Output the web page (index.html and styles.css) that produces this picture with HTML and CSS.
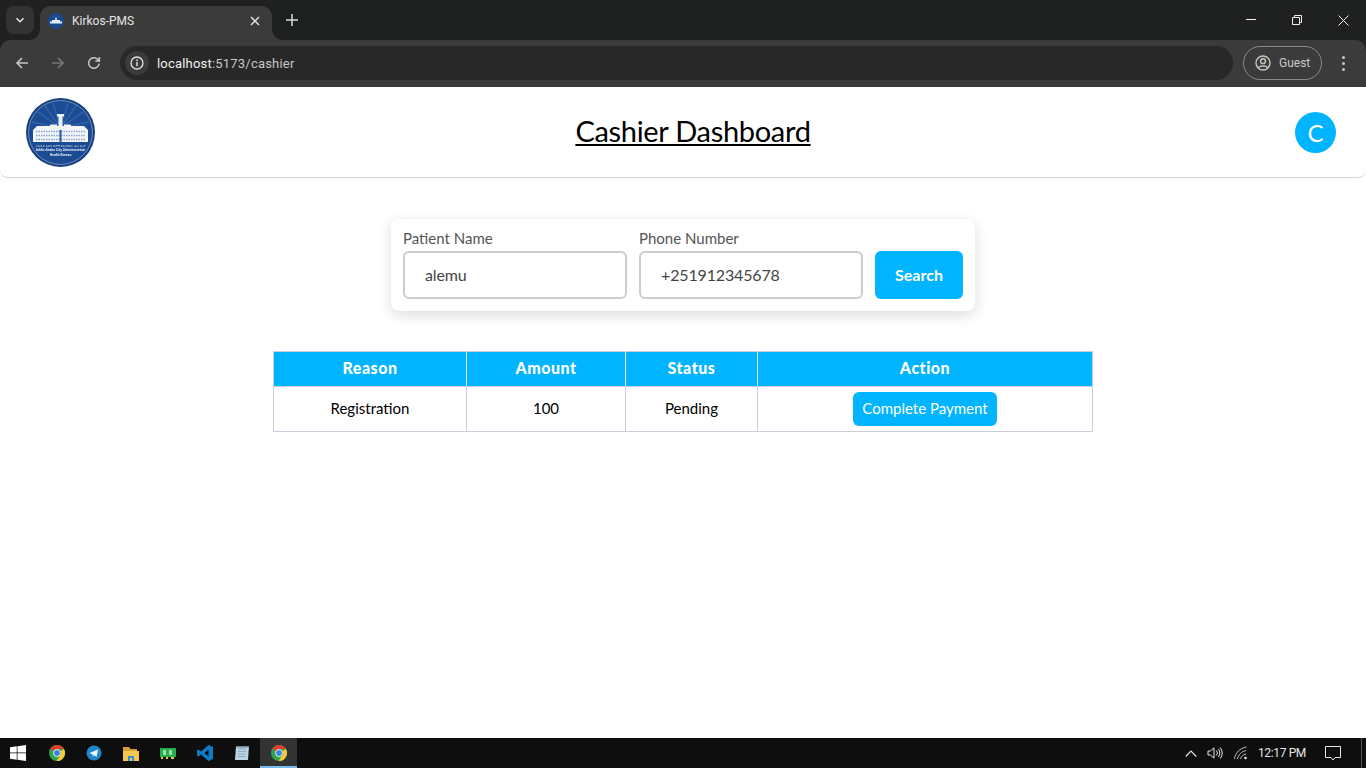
FILE: index.html
```html
<!DOCTYPE html>
<html>
	<head>
		<meta charset="UTF-8">
		<title>Kirkos-PMS</title>
		<link rel="stylesheet" href="styles.css">
	</head>
	<body>
		<div class="tabstrip">
			<div class="tablist-btn">
				<svg width="12" height="12" viewBox="0 0 12 12"><path d="M2.500 4.200 6 7.700l3.500-3.500" fill="none" stroke="#e3e3e3" stroke-width="1.600"/></svg>
			</div>
			<div class="tab">
				<svg class="favicon" width="16" height="16" viewBox="0 0 16 16">
					<circle cx="8" cy="8" r="8" fill="#1b4a8c"/>
					<path d="M2 8.500h12v2H2zM4 7h8v1.500H4zM7.300 4.500h1.400V7H7.300z" fill="#e8eef6"/>
				</svg>
				<span class="tab-title">Kirkos-PMS</span>
				<svg class="tab-close" width="10" height="10" viewBox="0 0 10 10"><path d="M1 1l8 8M9 1 1 9" stroke="#e3e3e3" stroke-width="1.500"/></svg>
			</div>
			<svg class="newtab" width="12" height="12" viewBox="0 0 12 12"><path d="M6 0v12M0 6h12" stroke="#d8d8d8" stroke-width="1.500"/></svg>
			<div class="window-btns">
				<svg width="10" height="10" viewBox="0 0 10 10"><path d="M0 4.500h10" stroke="#f0f0f0"/></svg>
				<svg width="10" height="10" viewBox="0 0 10 10"><path d="M.5 2.500h7v7h-7zM2.500 2.500V.5h7v7h-2" fill="none" stroke="#f0f0f0"/></svg>
				<svg width="11" height="11" viewBox="0 0 11 11"><path d="M.5.5l10 10M10.500.5l-10 10" stroke="#f0f0f0"/></svg>
			</div>
		</div>

		<div class="toolbar">
			<svg class="nav-icon" width="16" height="16" viewBox="0 0 16 16"><path d="M14 8H3M8 3 3 8l5 5" fill="none" stroke="#c7c7c7" stroke-width="1.600"/></svg>
			<svg class="nav-icon" width="16" height="16" viewBox="0 0 16 16"><path d="M2 8h11M8 3l5 5-5 5" fill="none" stroke="#7a7a7a" stroke-width="1.600"/></svg>
			<svg class="nav-icon" width="16" height="16" viewBox="0 0 16 16"><path d="M13.200 8.600A5.300 5.300 0 1 1 11.700 4.200L13.400 6M13.400 2v4h-4" fill="none" stroke="#c7c7c7" stroke-width="1.500"/></svg>
			<div class="omnibox">
				<div class="site-info">
					<svg width="14" height="14" viewBox="0 0 14 14"><circle cx="7" cy="7" r="6" fill="none" stroke="#e3e3e3" stroke-width="1.300"/><path d="M7 6v4.200" stroke="#e3e3e3" stroke-width="1.400"/><circle cx="7" cy="4.200" r=".9" fill="#e3e3e3"/></svg>
				</div>
				<span class="url"><b>localhost</b>:5173/cashier</span>
			</div>
			<div class="guest">
				<svg width="16" height="16" viewBox="0 0 16 16"><circle cx="8" cy="8" r="7" fill="none" stroke="#c7c7c7" stroke-width="1.400"/><circle cx="8" cy="6.200" r="2.400" fill="none" stroke="#c7c7c7" stroke-width="1.400"/><path d="M3.400 12.600C5 10.400 11 10.400 12.600 12.600" fill="none" stroke="#c7c7c7" stroke-width="1.400"/></svg>
				<span>Guest</span>
			</div>
			<div class="kebab"><i></i><i></i><i></i></div>
		</div>

		<div class="page">
			<header class="top">
				<svg class="logo" width="69" height="69" viewBox="0 0 69 69">
					<circle cx="34.500" cy="34.500" r="34.500" fill="#163f7e"/>
					<circle cx="34.500" cy="34.500" r="32" fill="#1b4b92" stroke="#a9bedc" stroke-width=".6"/>
					<path d="M34.500 30 12 14M34.500 30 19 8M34.500 30 27 5M34.500 30 42 5M34.500 30 50 8M34.500 30 57 14M34.500 30 6 24M34.500 30 63 24" stroke="#2f5fa6" stroke-width="1.800"/>
					<path d="M31 16h7v2.500h-1.500V28h-4V18.500H31z" fill="#eef3f8"/>
					<path d="M7 32l4-4h13v-1.500h7V28h7v-1.500h7V28h13l4 4v12H7z" fill="#f2f5f9"/>
					<path d="M10 33.500h49M10 37.500h49M10 41.500h49" stroke="#8aa5c9" stroke-width="1.400" stroke-dasharray="1.500 1"/>
					<path d="M33.500 32h2v12h-2z" fill="#2d5a9c"/>
					<text class="logo-text" x="34.500" y="48.500" font-size="3.400">የአዲስ አበባ ከተማ አስተዳደር ጤና ቢሮ</text>
					<text class="logo-text" x="34.500" y="53" font-size="3.400" font-weight="700">Addis Ababa City Administration</text>
					<text class="logo-text" x="34.500" y="58" font-size="3.400" font-weight="700">Health Bureau</text>
				</svg>
				<h1 class="page-title">Cashier Dashboard</h1>
				<div class="avatar">C</div>
			</header>

			<main class="content">
				<form class="search-card">
					<label class="field">
						<span>Patient Name</span>
						<input type="text" value="alemu">
					</label>
					<label class="field">
						<span>Phone Number</span>
						<input type="text" value="+251912345678">
					</label>
					<button class="search-btn" type="button">Search</button>
				</form>

				<table class="bills">
					<colgroup>
						<col class="col-reason"><col class="col-amount"><col class="col-status"><col class="col-action">
					</colgroup>
					<thead>
						<tr><th>Reason</th><th>Amount</th><th>Status</th><th>Action</th></tr>
					</thead>
					<tbody>
						<tr>
							<td>Registration</td>
							<td>100</td>
							<td>Pending</td>
							<td><button class="pay-btn" type="button">Complete Payment</button></td>
						</tr>
					</tbody>
				</table>
			</main>
		</div>

		<footer class="taskbar">
			<div class="start">
				<svg width="16" height="16" viewBox="0 0 18 18"><path d="M0 2.600 7.600 1.500v7H0zM8.400 1.400 18 0v8.500H8.400zM0 9.400h7.600v7.100L0 15.400zM8.400 9.400H18V18l-9.600-1.400z" fill="#fff"/></svg>
			</div>
			<div class="task-icon">
				<svg width="16" height="16" viewBox="0 0 16 16"><use href="#chrome"/></svg>
			</div>
			<div class="task-icon">
				<svg width="16" height="16" viewBox="0 0 16 16"><circle cx="8" cy="8" r="7.500" fill="#1e88c7"/><path d="M3.500 8 12 4.500 10.600 12 8 10.200 6.800 11.400 6.600 9.400z" fill="#e9f5fb"/></svg>
			</div>
			<div class="task-icon">
				<svg width="16" height="15" viewBox="0 0 16 15"><path d="M0 1h6l1.500 2H14v3H0z" fill="#d9a032"/><path d="M0 5h16v10H0z" fill="#f6c94e"/><path d="M5 10h6v5H9v-3H7v3H5z" fill="#2f8fd8"/></svg>
			</div>
			<div class="task-icon">
				<svg width="16" height="12" viewBox="0 0 16 12"><path d="M0 1h16v9H0z" fill="#21b04b"/><path d="M3 3h3v5H3zM9 3h3v5H9z" fill="#a4d8a8"/><path d="M1 10h2v2H1zM6 10h2v2H6zM11 10h3v2h-3z" fill="#e5c93a"/></svg>
			</div>
			<div class="task-icon">
				<svg width="16" height="16" viewBox="0 0 16 16"><path d="M11.500 0 16 2v12l-4.500 2L4 9.500 1.300 11.600 0 11V5l1.300-.6L4 6.500zm0 4.600L7.300 8l4.200 3.400z" fill="#0a7cc9"/></svg>
			</div>
			<div class="task-icon">
				<svg width="16" height="16" viewBox="0 0 16 16"><path d="M2 1h13l-1 14H1z" fill="#bcd6e6"/><path d="M4 4h8M4 6.500h8M3.800 9h8M3.600 11.500h8" stroke="#7d97a8" stroke-width=".7"/><path d="M2 1h13v1.500H2z" fill="#6f8796"/></svg>
			</div>
			<div class="task-icon task-active">
				<svg width="16" height="16" viewBox="0 0 16 16">
					<g id="chrome">
						<circle cx="8" cy="8" r="8" fill="#2fa44f"/>
						<path d="M8 0a8 8 0 0 1 6.930 4H8A4 4 0 0 0 4.300 6.500L1.700 3A8 8 0 0 1 8 0z" fill="#e33b2e"/>
						<path d="M14.930 4A8 8 0 0 1 7.500 16l3.400-5.200A4 4 0 0 0 11.500 6L14.930 4z" fill="#fcc934"/>
						<circle cx="8" cy="8" r="3.700" fill="#fff"/>
						<circle cx="8" cy="8" r="2.900" fill="#3f7fe0"/>
					</g>
				</svg>
			</div>
			<div class="tray">
				<svg width="12" height="7" viewBox="0 0 12 7"><path d="M.7 6.500 6 1l5.300 5.500" fill="none" stroke="#e6e6e6" stroke-width="1.100"/></svg>
				<svg class="volume" width="16" height="14" viewBox="0 0 16 14"><path d="M1 5h2.500L7 1.800v10.400L3.500 9H1zM9.300 4.500a3.500 3.500 0 0 1 0 5M11.300 3a6 6 0 0 1 0 8M13.200 1.500a8.500 8.500 0 0 1 0 11" fill="none" stroke="#e6e6e6"/></svg>
				<svg width="14" height="14" viewBox="0 0 14 14"><path d="M.5 13C1 7 6 2 12.500 1M3.500 13C4 9 7.500 5.500 12 4.500M6.500 13c.4-2 2.500-4.500 5.500-5" fill="none" stroke="#bdbdbd"/><circle cx="11.500" cy="12" r="1.300" fill="#e6e6e6"/></svg>
				<span class="clock">12:17 PM</span>
				<svg class="notify" width="16" height="15" viewBox="0 0 16 15"><path d="M.5.500h15v11H10L8 14l-2-2.500H.5z" fill="none" stroke="#e6e6e6"/></svg>
				<i class="show-desktop"></i>
			</div>
		</footer>
	</body>
</html>
```

FILE: styles.css
```css
*{
	padding:0;
	margin:0;
	box-sizing:border-box;
}
body{
	height:100vh;
	display:flex;
	flex-direction:column;
	overflow:hidden;
	background:#fff;
	font-family:"Lato","Open Sans",sans-serif;
}

/* browser frame */
.tabstrip{
	height:40px;
	flex:none;
	display:flex;
	align-items:flex-end;
	background:#1f2120;
	padding-left:6px;
}
.tablist-btn{
	width:28px;
	height:28px;
	margin-bottom:6px;
	border-radius:8px;
	background:#333;
	display:flex;
	align-items:center;
	justify-content:center;
}
.tab{
	width:232px;
	height:34px;
	margin-left:6px;
	padding:0 12px 4px 8px;
	background:#3b3b3b;
	border-radius:10px 10px 0 0;
	display:flex;
	align-items:center;
	color:#e3e3e3;
	font:12px "Roboto",sans-serif;
	position:relative;
}
.tab::before,.tab::after{
	content:"";
	position:absolute;
	bottom:0;
	width:10px;
	height:10px;
}
.tab::before{
	left:-10px;
	background:radial-gradient(circle at 0 0,transparent 9.500px,#3b3b3b 10px);
}
.tab::after{
	right:-10px;
	background:radial-gradient(circle at 100% 0,transparent 9.500px,#3b3b3b 10px);
}
.tab-title{
	flex:1;
	margin-left:8px;
}
.newtab{
	margin:0 0 14px 14px;
}
.window-btns{
	margin-left:auto;
	width:138px;
	height:40px;
	display:flex;
	align-items:center;
	justify-content:space-between;
	padding:0 17px 0 18px;
}
.toolbar{
	height:47px;
	flex:none;
	display:flex;
	align-items:center;
	background:linear-gradient(#1f2120 0,#1f2120 10px,#3b3b3b 10px);
	padding:0 14px 1px;
	position:relative;
}
.toolbar::before{
	content:"";
	position:absolute;
	top:0;
	left:0;
	right:0;
	height:20px;
	background:#3b3b3b;
	border-radius:10px 10px 0 0;
}
.toolbar > *{
	position:relative;
}
.nav-icon{
	margin-right:20px;
}
.nav-icon:nth-child(3){
	margin-right:18px;
}
.omnibox{
	flex:1;
	height:34px;
	border-radius:17px;
	background:#282828;
	display:flex;
	align-items:center;
	padding-left:5px;
	color:#c7c7c7;
	font:13px "Roboto",sans-serif;
	letter-spacing:.2px;
}
.url b{
	font-weight:400;
	color:#f0f0f0;
}
.site-info{
	width:24px;
	height:24px;
	border-radius:50%;
	background:#3b3b3b;
	display:flex;
	align-items:center;
	justify-content:center;
	margin-right:8px;
}
.guest{
	width:79px;
	height:34px;
	margin-left:10px;
	border:1px solid #8a8a8a;
	border-radius:17px;
	display:flex;
	align-items:center;
	gap:8px;
	padding-left:11px;
	color:#c7c7c7;
	font:12px "Roboto",sans-serif;
}
.kebab{
	width:4px;
	margin:0 6px 0 20px;
	display:flex;
	flex-direction:column;
	gap:3px;
}
.kebab i{
	width:3px;
	height:3px;
	border-radius:50%;
	background:#c7c7c7;
}

/* page */
.page{
	flex:1;
	display:flex;
	flex-direction:column;
	min-height:0;
}
.top{
	height:91px;
	flex:none;
	display:flex;
	align-items:center;
	justify-content:space-between;
	padding:0 30px 0 26px;
	border-bottom:1px solid #d4d4d4;
	border-radius:0 0 8px 8px;
}
.logo{
	filter:blur(.35px);
}
.logo-text{
	fill:#dfe8f3;
	text-anchor:middle;
	font-family:"Roboto","Noto Sans",sans-serif;
}
.page-title{
	font-size:29px;
	font-weight:400;
	color:#000;
	text-decoration:underline;
	letter-spacing:-.3px;
	margin:0 4px 3px 0;
}
.avatar{
	width:41px;
	height:41px;
	border-radius:50%;
	background:#00b4ff;
	color:#fff;
	font-size:24px;
	display:flex;
	align-items:center;
	justify-content:center;
}
.content{
	display:flex;
	flex-direction:column;
	align-items:center;
	padding-top:41px;
}
.search-card{
	width:584px;
	height:92px;
	display:flex;
	align-items:flex-end;
	gap:12px;
	padding:12px;
	border-radius:8px;
	background:#fff;
	box-shadow:0 4px 14px rgba(0,0,0,.14);
}
.field{
	width:224px;
	display:flex;
	flex-direction:column;
	gap:4px;
	font-size:15px;
	color:#555;
}
.field input{
	height:48px;
	width:100%;
	padding:0 20px 2px;
	border:2px solid #ccc;
	border-radius:6px;
	font:16px "Lato",sans-serif;
	color:#444;
	letter-spacing:-.15px;
	outline:none;
}
.search-btn{
	width:88px;
	height:48px;
	padding-bottom:2px;
	border:0;
	border-radius:6px;
	background:#00b4ff;
	color:#fff;
	font:700 16px "Lato",sans-serif;
}
.bills{
	width:819px;
	margin-top:40px;
	border-collapse:collapse;
	table-layout:fixed;
	font-size:15px;
	color:#000;
}
.col-reason{width:193px;}
.col-amount{width:159px;}
.col-status{width:132px;}
.col-action{width:335px;}
.bills th{
	height:35px;
	padding-bottom:3px;
	background:#00b4ff;
	color:#fff;
	font-size:16px;
	font-weight:900;
	letter-spacing:.5px;
	border:1px solid #ccd;
	border-left-color:#e6f6ff;
	border-right-color:#e6f6ff;
}
.bills th:first-child{border-left-color:#ccd;}
.bills th:last-child{border-right-color:#ccd;}
.bills td{
	height:45px;
	padding-bottom:2px;
	text-align:center;
	border:1px solid #ccd;
}
.bills td:last-child{
	padding-bottom:0;
}
.pay-btn{
	width:144px;
	height:34px;
	display:block;
	margin:0 auto;
	padding-bottom:2px;
	border:0;
	border-radius:6px;
	background:#00b4ff;
	color:#fff;
	font:15px "Lato",sans-serif;
}

/* windows taskbar */
.taskbar{
	height:30px;
	flex:none;
	display:flex;
	align-items:center;
	background:#0e0e0e;
}
.start{
	width:38px;
	display:flex;
	justify-content:center;
	padding-right:2px;
}
.task-icon{
	width:37px;
	height:30px;
	display:flex;
	align-items:center;
	justify-content:center;
}
.task-active{
	background:#333;
	border-bottom:2px solid #76b9ed;
	padding-top:2px;
}
.tray{
	margin-left:auto;
	display:flex;
	align-items:center;
	color:#e6e6e6;
	font:12px "Roboto",sans-serif;
}
.tray svg{
	margin-right:10px;
}
.tray .volume{
	margin-right:11px;
}
.clock{
	margin-right:19px;
	letter-spacing:-.35px;
}
.tray .notify{
	margin-right:20px;
}
.show-desktop{
	width:1px;
	height:30px;
	background:#555;
	margin-right:4px;
}
```
